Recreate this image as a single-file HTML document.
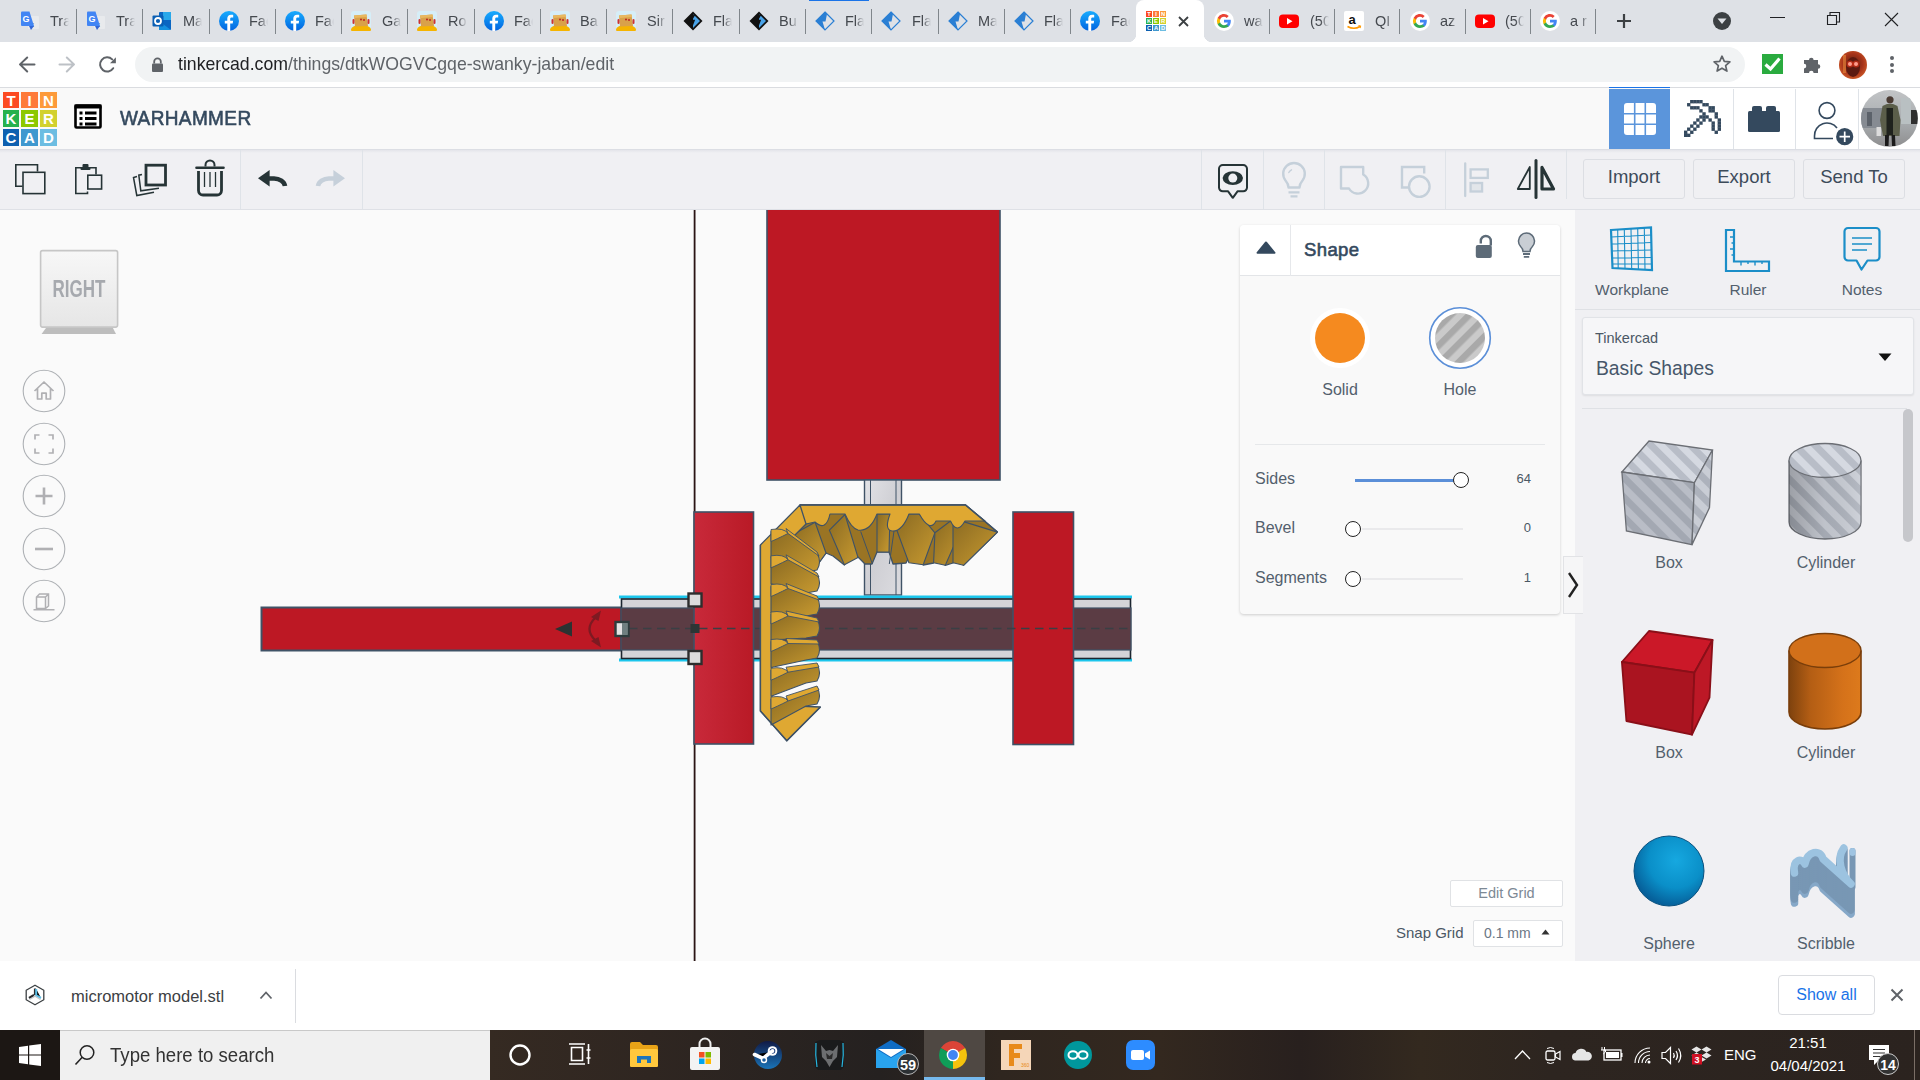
<!DOCTYPE html>
<html><head><meta charset="utf-8"><style>*{margin:0;padding:0;box-sizing:border-box}
html,body{width:1920px;height:1080px;overflow:hidden;background:#fafafa;font-family:"Liberation Sans",sans-serif}
.a{position:absolute}
svg{overflow:visible}

.tt{font-size:14.5px;line-height:18px;color:#45494f;width:19px;white-space:nowrap;overflow:hidden;-webkit-mask-image:linear-gradient(90deg,#000 55%,transparent 100%)}
.url{font-size:19px;line-height:22px;color:#5f6368;white-space:nowrap;transform-origin:0 0;transform:scaleX(.93)}

.logo{color:#fff;font-weight:bold;font-size:15px;line-height:17px;text-align:center}
.btn{width:102px;height:40px;border:1px solid #dcdee3;border-radius:3px;font-size:18.5px;line-height:34px;text-align:center;color:#3d4b5a;background:#f0f0f3}

.lbl{font-size:16px;line-height:20px;color:#53606d;text-align:center;white-space:nowrap}
.pn{font-size:16px;color:#53606d;white-space:nowrap}
.sx{transform-origin:0 0}
</style></head><body>
<svg width="0" height="0" style="position:absolute"><defs>
<symbol id="i-gt" viewBox="0 0 20 20"><rect x="8" y="5" width="11" height="13" rx="1" fill="#e8eaed"/><text x="10" y="16" font-size="8" fill="#5f6368" font-family="Liberation Sans">x</text><path d="M1 1.5Q1 0.5 2 0.5H9.5L14 15H2Q1 15 1 14Z" fill="#4285f4"/><path d="M9 15L11 19L14 15Z" fill="#3367d6"/><text x="2.5" y="11" font-size="9" font-weight="bold" fill="#fff" font-family="Liberation Sans">G</text></symbol>
<symbol id="i-ol" viewBox="0 0 20 20"><rect x="7" y="1" width="12" height="18" rx="1" fill="#0a66c2"/><rect x="11" y="1" width="8" height="8" fill="#28a8ea"/><path d="M7 10L19 19H7Z" fill="#1490df"/><rect x="0.5" y="4.5" width="11" height="11" rx="1" fill="#0a5fb4"/><circle cx="6" cy="10" r="3" fill="none" stroke="#fff" stroke-width="1.8"/></symbol>
<symbol id="i-fb" viewBox="0 0 20 20"><defs><linearGradient id="fbg" x1="0" y1="0" x2="0" y2="1"><stop offset="0" stop-color="#18acfe"/><stop offset="1" stop-color="#0163e0"/></linearGradient></defs><circle cx="10" cy="10" r="10" fill="url(#fbg)"/><path d="M11.2 20V12.6H13.7L14.1 9.7H11.2V7.9C11.2 7.1 11.5 6.5 12.6 6.5H14.2V3.9C13.9 3.9 13 3.8 12 3.8C9.8 3.8 8.3 5.1 8.3 7.6V9.7H5.8V12.6H8.3V20Z" fill="#fff"/></symbol>
<symbol id="i-rb" viewBox="0 0 20 20"><rect x="0" y="0" width="20" height="20" rx="3" fill="#d6eef8"/><ellipse cx="10" cy="18.5" rx="10" ry="4.5" fill="#f5b400"/><path d="M3 4.5L15.5 3.5L17 15L4 15.5Z" fill="#d9a14a"/><path d="M3 4.5L15.5 3.5L16 6L3.5 7Z" fill="#e8b860"/><circle cx="10" cy="8.5" r="1" fill="#b22"/><circle cx="13" cy="9" r="1" fill="#b22"/><rect x="1.5" y="8" width="2" height="5" rx="1" fill="#c33"/><rect x="16.5" y="8" width="2" height="5" rx="1" fill="#c33"/></symbol>
<symbol id="i-fd" viewBox="0 0 20 20"><path d="M10 0.5L19.5 10L10 19.5L0.5 10Z" fill="#111"/><path d="M10 3L17 10L10 17Z" fill="#4aa3e8"/><path d="M11.5 3.5L8 9.5H11L8.5 16" fill="none" stroke="#111" stroke-width="1.6"/></symbol>
<symbol id="i-fl" viewBox="0 0 20 20"><path d="M10 1L19 10L10 19L1 10Z" fill="none" stroke="#2a7fd4" stroke-width="1.2"/><path d="M10 1L1 10L10 19L7.5 10.5H10.5L12 3Z" fill="#2a7fd4"/></symbol>
<symbol id="i-tc" viewBox="0 0 20 20"><rect x="0" y="0" width="6" height="6" fill="#fc4a22"/><text x="3.0" y="5.1" font-size="5.8" font-weight="bold" fill="#fff" text-anchor="middle" font-family="Liberation Sans">T</text><rect x="7" y="0" width="6" height="6" fill="#fe7a3a"/><text x="10.0" y="5.1" font-size="5.8" font-weight="bold" fill="#fff" text-anchor="middle" font-family="Liberation Sans">I</text><rect x="14" y="0" width="6" height="6" fill="#fd9a3a"/><text x="17.0" y="5.1" font-size="5.8" font-weight="bold" fill="#fff" text-anchor="middle" font-family="Liberation Sans">N</text><rect x="0" y="7" width="6" height="6" fill="#26b14e"/><text x="3.0" y="12.1" font-size="5.8" font-weight="bold" fill="#fff" text-anchor="middle" font-family="Liberation Sans">K</text><rect x="7" y="7" width="6" height="6" fill="#8cc800"/><text x="10.0" y="12.1" font-size="5.8" font-weight="bold" fill="#fff" text-anchor="middle" font-family="Liberation Sans">E</text><rect x="14" y="7" width="6" height="6" fill="#d2d12e"/><text x="17.0" y="12.1" font-size="5.8" font-weight="bold" fill="#fff" text-anchor="middle" font-family="Liberation Sans">R</text><rect x="0" y="14" width="6" height="6" fill="#0d60b0"/><text x="3.0" y="19.1" font-size="5.8" font-weight="bold" fill="#fff" text-anchor="middle" font-family="Liberation Sans">C</text><rect x="7" y="14" width="6" height="6" fill="#3f98cf"/><text x="10.0" y="19.1" font-size="5.8" font-weight="bold" fill="#fff" text-anchor="middle" font-family="Liberation Sans">A</text><rect x="14" y="14" width="6" height="6" fill="#6cbde2"/><text x="17.0" y="19.1" font-size="5.8" font-weight="bold" fill="#fff" text-anchor="middle" font-family="Liberation Sans">D</text></symbol>
<symbol id="i-gg" viewBox="0 0 20 20"><circle cx="10" cy="10" r="10" fill="#fff"/><path d="M16.8 10.2c0-.5 0-1-.1-1.5H10v2.8h3.8a3.3 3.3 0 0 1-1.4 2.1v1.8h2.3c1.3-1.2 2.1-3 2.1-5.2z" fill="#4285f4"/><path d="M10 17c1.9 0 3.5-.6 4.7-1.7l-2.3-1.8c-.6.4-1.4.7-2.4.7-1.8 0-3.4-1.2-3.9-2.9H3.7v1.9A7 7 0 0 0 10 17z" fill="#34a853"/><path d="M6.1 11.3a4.2 4.2 0 0 1 0-2.6V6.8H3.7a7 7 0 0 0 0 6.4z" fill="#fbbc05"/><path d="M10 5.8c1 0 1.9.4 2.7 1.1l2-2A7 7 0 0 0 3.7 6.8l2.4 1.9C6.6 7 8.2 5.8 10 5.8z" fill="#ea4335"/></symbol>
<symbol id="i-yt" viewBox="0 0 20 20"><rect x="0" y="3.5" width="20" height="13.5" rx="4" fill="#ff0000"/><path d="M8 7V13.5L13.5 10.2Z" fill="#fff"/></symbol>
<symbol id="i-am" viewBox="0 0 20 20"><rect width="20" height="20" rx="2" fill="#fff"/><text x="4.5" y="13" font-size="13" font-weight="bold" fill="#111" font-family="Liberation Sans">a</text><path d="M3.5 15.5Q10 19 16 15.5" fill="none" stroke="#f90" stroke-width="1.5"/><path d="M14.5 14.5L16.5 15.2L16 17" fill="none" stroke="#f90" stroke-width="1.2"/></symbol>
</defs></svg>
<div class="a" style="left:0;top:0;width:1920px;height:42px;background:#dee1e6"></div>
<div class="a" style="left:809px;top:0;width:60px;height:1px;background:#1a73e8"></div>
<svg class="a" style="left:20px;top:11px" width="20" height="20"><use href="#i-gt"/></svg>
<div class="a tt" style="left:50px;top:12px">Tra</div>
<div class="a" style="left:76px;top:9px;width:1px;height:25px;background:#80868b"></div>
<svg class="a" style="left:86px;top:11px" width="20" height="20"><use href="#i-gt"/></svg>
<div class="a tt" style="left:116px;top:12px">Tra</div>
<div class="a" style="left:142px;top:9px;width:1px;height:25px;background:#80868b"></div>
<svg class="a" style="left:152px;top:11px" width="20" height="20"><use href="#i-ol"/></svg>
<div class="a tt" style="left:183px;top:12px">Ma</div>
<div class="a" style="left:209px;top:9px;width:1px;height:25px;background:#80868b"></div>
<svg class="a" style="left:219px;top:11px" width="20" height="20"><use href="#i-fb"/></svg>
<div class="a tt" style="left:249px;top:12px">Fac</div>
<div class="a" style="left:275px;top:9px;width:1px;height:25px;background:#80868b"></div>
<svg class="a" style="left:285px;top:11px" width="20" height="20"><use href="#i-fb"/></svg>
<div class="a tt" style="left:315px;top:12px">Fac</div>
<div class="a" style="left:341px;top:9px;width:1px;height:25px;background:#80868b"></div>
<svg class="a" style="left:351px;top:11px" width="20" height="20"><use href="#i-rb"/></svg>
<div class="a tt" style="left:382px;top:12px">Ga</div>
<div class="a" style="left:407px;top:9px;width:1px;height:25px;background:#80868b"></div>
<svg class="a" style="left:417px;top:11px" width="20" height="20"><use href="#i-rb"/></svg>
<div class="a tt" style="left:448px;top:12px">Ro</div>
<div class="a" style="left:474px;top:9px;width:1px;height:25px;background:#80868b"></div>
<svg class="a" style="left:484px;top:11px" width="20" height="20"><use href="#i-fb"/></svg>
<div class="a tt" style="left:514px;top:12px">Fac</div>
<div class="a" style="left:540px;top:9px;width:1px;height:25px;background:#80868b"></div>
<svg class="a" style="left:550px;top:11px" width="20" height="20"><use href="#i-rb"/></svg>
<div class="a tt" style="left:580px;top:12px">Ba</div>
<div class="a" style="left:606px;top:9px;width:1px;height:25px;background:#80868b"></div>
<svg class="a" style="left:616px;top:11px" width="20" height="20"><use href="#i-rb"/></svg>
<div class="a tt" style="left:647px;top:12px">Sir</div>
<div class="a" style="left:672px;top:9px;width:1px;height:25px;background:#80868b"></div>
<svg class="a" style="left:683px;top:11px" width="20" height="20"><use href="#i-fd"/></svg>
<div class="a tt" style="left:713px;top:12px">Fla</div>
<div class="a" style="left:739px;top:9px;width:1px;height:25px;background:#80868b"></div>
<svg class="a" style="left:749px;top:11px" width="20" height="20"><use href="#i-fd"/></svg>
<div class="a tt" style="left:779px;top:12px">Bu</div>
<div class="a" style="left:805px;top:9px;width:1px;height:25px;background:#80868b"></div>
<svg class="a" style="left:815px;top:11px" width="20" height="20"><use href="#i-fl"/></svg>
<div class="a tt" style="left:845px;top:12px">Fla</div>
<div class="a" style="left:871px;top:9px;width:1px;height:25px;background:#80868b"></div>
<svg class="a" style="left:881px;top:11px" width="20" height="20"><use href="#i-fl"/></svg>
<div class="a tt" style="left:912px;top:12px">Fla</div>
<div class="a" style="left:938px;top:9px;width:1px;height:25px;background:#80868b"></div>
<svg class="a" style="left:948px;top:11px" width="20" height="20"><use href="#i-fl"/></svg>
<div class="a tt" style="left:978px;top:12px">Ma</div>
<div class="a" style="left:1004px;top:9px;width:1px;height:25px;background:#80868b"></div>
<svg class="a" style="left:1014px;top:11px" width="20" height="20"><use href="#i-fl"/></svg>
<div class="a tt" style="left:1044px;top:12px">Fla</div>
<div class="a" style="left:1070px;top:9px;width:1px;height:25px;background:#80868b"></div>
<svg class="a" style="left:1080px;top:11px" width="20" height="20"><use href="#i-fb"/></svg>
<div class="a tt" style="left:1111px;top:12px">Fac</div>
<div class="a" style="left:1136px;top:0;width:68px;height:42px;background:#fff;border-radius:8px 8px 0 0"></div>
<div class="a" style="left:1128px;top:34px;width:8px;height:8px;background:radial-gradient(circle at 0 0,#dee1e6 8px,#fff 8.5px)"></div>
<div class="a" style="left:1204px;top:34px;width:8px;height:8px;background:radial-gradient(circle at 100% 0,#dee1e6 8px,#fff 8.5px)"></div>
<svg class="a" style="left:1146px;top:11px" width="20" height="20"><use href="#i-tc"/></svg>
<svg class="a" style="left:1178px;top:16px" width="11" height="11" viewBox="0 0 11 11"><path d="M1 1L10 10M10 1L1 10" stroke="#3c4043" stroke-width="1.8"/></svg>
<svg class="a" style="left:1214px;top:11px" width="20" height="20"><use href="#i-gg"/></svg>
<div class="a tt" style="left:1244px;top:12px">wa</div>
<div class="a" style="left:1269px;top:9px;width:1px;height:25px;background:#80868b"></div>
<svg class="a" style="left:1279px;top:11px" width="20" height="20"><use href="#i-yt"/></svg>
<div class="a tt" style="left:1310px;top:12px">(50</div>
<div class="a" style="left:1334px;top:9px;width:1px;height:25px;background:#80868b"></div>
<svg class="a" style="left:1344px;top:11px" width="20" height="20"><use href="#i-am"/></svg>
<div class="a tt" style="left:1375px;top:12px">QI</div>
<div class="a" style="left:1399px;top:9px;width:1px;height:25px;background:#80868b"></div>
<svg class="a" style="left:1410px;top:11px" width="20" height="20"><use href="#i-gg"/></svg>
<div class="a tt" style="left:1440px;top:12px">az</div>
<div class="a" style="left:1465px;top:9px;width:1px;height:25px;background:#80868b"></div>
<svg class="a" style="left:1475px;top:11px" width="20" height="20"><use href="#i-yt"/></svg>
<div class="a tt" style="left:1505px;top:12px">(50</div>
<div class="a" style="left:1530px;top:9px;width:1px;height:25px;background:#80868b"></div>
<svg class="a" style="left:1540px;top:11px" width="20" height="20"><use href="#i-gg"/></svg>
<div class="a tt" style="left:1570px;top:12px">a r</div>
<div class="a" style="left:1595px;top:9px;width:1px;height:25px;background:#80868b"></div>
<svg class="a" style="left:1616px;top:13px" width="16" height="16" viewBox="0 0 16 16"><path d="M8 1V15M1 8H15" stroke="#3c4043" stroke-width="2.2"/></svg>
<svg class="a" style="left:1712px;top:11px" width="20" height="20" viewBox="0 0 20 20"><circle cx="10" cy="10" r="9" fill="#3c4043"/><path d="M5.5 7.5H14.5L10 13Z" fill="#dee1e6"/></svg>
<div class="a" style="left:1770px;top:17px;width:15px;height:1px;background:#202124"></div>
<svg class="a" style="left:1826px;top:11px" width="15" height="15" viewBox="0 0 15 15"><path d="M1.5 4.5h9v9h-9z" fill="none" stroke="#202124" stroke-width="1.1"/><path d="M4 4.5V1.5h9.5v9.5H10.5" fill="none" stroke="#202124" stroke-width="1.1"/></svg>
<svg class="a" style="left:1884px;top:12px" width="15" height="15" viewBox="0 0 15 15"><path d="M1 1L14 14M14 1L1 14" stroke="#202124" stroke-width="1.1"/></svg>
<div class="a" style="left:0;top:42px;width:1920px;height:45px;background:#fff"></div>
<div class="a" style="left:0;top:87px;width:1920px;height:1px;background:#dadce0"></div>
<div class="a" style="left:135px;top:47px;width:1610px;height:35px;border-radius:18px;background:#f1f3f4"></div>
<svg class="a" style="left:18px;top:56px" width="18" height="18" viewBox="0 0 18 18"><path d="M16.5 8.4H2M9.2 1.5L2 8.4L9.2 15.5" fill="none" stroke="#5f6368" stroke-width="2" stroke-linecap="round" stroke-linejoin="round"/></svg>
<svg class="a" style="left:58px;top:56px" width="18" height="18" viewBox="0 0 18 18"><path d="M1.5 8.4H16M8.8 1.5L16 8.4L8.8 15.5" fill="none" stroke="#bdc1c6" stroke-width="2" stroke-linecap="round" stroke-linejoin="round"/></svg>
<svg class="a" style="left:98px;top:56px" width="19" height="18" viewBox="0 0 19 18"><path d="M15.2 12.2A7.1 7.1 0 1 1 14.2 3.4" fill="none" stroke="#5f6368" stroke-width="2" stroke-linecap="round"/><path d="M12 7.3H17.9V1.2Z" fill="#5f6368"/></svg>
<svg class="a" style="left:151px;top:57px" width="13" height="15" viewBox="0 0 13 15"><path d="M3.2 6.5V4.6a3.3 3.3 0 0 1 6.6 0V6.5" fill="none" stroke="#5f6368" stroke-width="1.8"/><rect x="1" y="6.5" width="11" height="8.5" rx="1" fill="#5f6368"/></svg>
<div class="a url" style="left:178px;top:53px"><span style="color:#202124">tinkercad.com</span>/things/dtkWOGVCgqe-swanky-jaban/edit</div>
<svg class="a" style="left:1712px;top:54px" width="20" height="20" viewBox="0 0 20 20"><path d="M10 2.2L12.3 7.4L17.9 7.9L13.6 11.6L14.9 17.1L10 14.2L5.1 17.1L6.4 11.6L2.1 7.9L7.7 7.4Z" fill="none" stroke="#5f6368" stroke-width="1.7" stroke-linejoin="round"/></svg>
<svg class="a" style="left:1762px;top:54px" width="21" height="20" viewBox="0 0 21 20"><rect width="21" height="20" fill="#2aab3f"/><path d="M3.5 10.5L8.5 15L17.5 4.5" fill="none" stroke="#fff" stroke-width="3.2"/></svg>
<svg class="a" style="left:1803px;top:55px" width="20" height="19" viewBox="0 0 20 19"><path d="M1 5H6A2.3 2.3 0 1 1 10.6 5H15V9.2A2.3 2.3 0 1 1 15 13.8V18H10.6A2.3 2.3 0 1 0 6 18H1V13.4A2.3 2.3 0 1 0 1 8.8Z" fill="#5f6368"/></svg>
<svg class="a" style="left:1839px;top:51px" width="28" height="28" viewBox="0 0 28 28"><defs><radialGradient id="av1" cx="50%" cy="45%" r="60%"><stop offset="0" stop-color="#5a2012"/><stop offset=".6" stop-color="#a8341a"/><stop offset="1" stop-color="#d3602a"/></radialGradient></defs><circle cx="14" cy="14" r="14" fill="url(#av1)"/><rect x="4" y="4" width="3" height="18" fill="#e88b3a" opacity=".6"/><ellipse cx="14" cy="16" rx="7" ry="10" fill="#5c1a10"/><circle cx="11" cy="13" r="2" fill="#fff"/><circle cx="17" cy="13" r="2" fill="#fff"/><circle cx="11" cy="13" r="3.5" fill="#ff3a1a" opacity=".5"/><circle cx="17" cy="13" r="3.5" fill="#ff3a1a" opacity=".5"/></svg>
<div class="a" style="left:1890px;top:56.0px;width:4px;height:4px;border-radius:2px;background:#5f6368"></div>
<div class="a" style="left:1890px;top:62.5px;width:4px;height:4px;border-radius:2px;background:#5f6368"></div>
<div class="a" style="left:1890px;top:69.0px;width:4px;height:4px;border-radius:2px;background:#5f6368"></div>
<div class="a" style="left:0;top:88px;width:1920px;height:61px;background:#f9f9f9"></div>
<div class="a" style="left:1670px;top:88px;width:250px;height:61px;background:#fff"></div>
<div class="a" style="left:0;top:149px;width:1920px;height:1px;background:#dcdee4"></div>
<div class="a logo" style="left:3px;top:92px;width:16px;height:16px;background:#fc4a22">T</div>
<div class="a logo" style="left:21px;top:92px;width:17px;height:16px;background:#fe7a3a">I</div>
<div class="a logo" style="left:40px;top:92px;width:17px;height:16px;background:#fd9a3a">N</div>
<div class="a logo" style="left:3px;top:110px;width:16px;height:17px;background:#26b14e">K</div>
<div class="a logo" style="left:21px;top:110px;width:17px;height:17px;background:#8cc800">E</div>
<div class="a logo" style="left:40px;top:110px;width:17px;height:17px;background:#d2d12e">R</div>
<div class="a logo" style="left:3px;top:129px;width:16px;height:17px;background:#0d60b0">C</div>
<div class="a logo" style="left:21px;top:129px;width:17px;height:17px;background:#3f98cf">A</div>
<div class="a logo" style="left:40px;top:129px;width:17px;height:17px;background:#6cbde2">D</div>
<svg class="a" style="left:73px;top:103px" width="30" height="27" viewBox="0 0 30 27"><rect x="2.5" y="2.5" width="25" height="22" rx="1" fill="#fff" stroke="#000" stroke-width="2.6"/><rect x="1.5" y="1.5" width="27" height="4" fill="#000"/><rect x="6.5" y="8.5" width="3" height="3" fill="#000"/><rect x="12" y="8.5" width="11.5" height="3" fill="#000"/><rect x="6.5" y="14" width="3" height="3" fill="#000"/><rect x="12" y="14" width="11.5" height="3" fill="#000"/><rect x="6.5" y="19.5" width="3" height="3" fill="#000"/><rect x="12" y="19.5" width="11.5" height="3" fill="#000"/></svg>
<div class="a" style="left:120px;top:106px;font-size:20px;line-height:24px;color:#34495e;letter-spacing:0.4px;-webkit-text-stroke:0.6px #34495e;transform-origin:0 0;transform:scaleX(.95)">WARHAMMER</div>
<div class="a" style="left:1609px;top:87px;width:61px;height:1px;background:#1a73e8"></div>
<div class="a" style="left:1609px;top:89px;width:61px;height:60px;background:#5b95db"></div>
<svg class="a" style="left:1624px;top:103px" width="32" height="32" viewBox="0 0 32 32"><rect x="0" y="0" width="32" height="32" rx="3" fill="#fff"/><path d="M10.7 0V32M21.3 0V32M0 10.7H32M0 21.3H32" stroke="#5b95db" stroke-width="1.6"/></svg>
<div class="a" style="left:1733px;top:89px;width:1px;height:60px;background:#dfe3e8"></div>
<div class="a" style="left:1795px;top:89px;width:1px;height:60px;background:#dfe3e8"></div>
<div class="a" style="left:1858px;top:89px;width:1px;height:60px;background:#dfe3e8"></div>
<svg class="a" style="left:1683.7px;top:100.3px" width="36.7" height="36.7" viewBox="0 0 12 12"><g fill="#34495e"><rect x="2" y="0" width="1.1" height="1.1"/><rect x="3" y="0" width="1.1" height="1.1"/><rect x="4" y="0" width="1.1" height="1.1"/><rect x="5" y="0" width="1.1" height="1.1"/><rect x="1" y="1" width="1.1" height="1.1"/><rect x="6" y="1" width="1.1" height="1.1"/><rect x="7" y="1" width="1.1" height="1.1"/><rect x="2" y="2" width="1.1" height="1.1"/><rect x="3" y="2" width="1.1" height="1.1"/><rect x="4" y="2" width="1.1" height="1.1"/><rect x="8" y="2" width="1.1" height="1.1"/><rect x="9" y="2" width="1.1" height="1.1"/><rect x="5" y="3" width="1.1" height="1.1"/><rect x="8" y="3" width="1.1" height="1.1"/><rect x="9" y="3" width="1.1" height="1.1"/><rect x="6" y="4" width="1.1" height="1.1"/><rect x="10" y="4" width="1.1" height="1.1"/><rect x="5" y="5" width="1.1" height="1.1"/><rect x="6" y="5" width="1.1" height="1.1"/><rect x="7" y="5" width="1.1" height="1.1"/><rect x="10" y="5" width="1.1" height="1.1"/><rect x="4" y="6" width="1.1" height="1.1"/><rect x="6" y="6" width="1.1" height="1.1"/><rect x="8" y="6" width="1.1" height="1.1"/><rect x="11" y="6" width="1.1" height="1.1"/><rect x="3" y="7" width="1.1" height="1.1"/><rect x="5" y="7" width="1.1" height="1.1"/><rect x="9" y="7" width="1.1" height="1.1"/><rect x="11" y="7" width="1.1" height="1.1"/><rect x="2" y="8" width="1.1" height="1.1"/><rect x="4" y="8" width="1.1" height="1.1"/><rect x="9" y="8" width="1.1" height="1.1"/><rect x="11" y="8" width="1.1" height="1.1"/><rect x="1" y="9" width="1.1" height="1.1"/><rect x="3" y="9" width="1.1" height="1.1"/><rect x="9" y="9" width="1.1" height="1.1"/><rect x="11" y="9" width="1.1" height="1.1"/><rect x="0" y="10" width="1.1" height="1.1"/><rect x="2" y="10" width="1.1" height="1.1"/><rect x="10" y="10" width="1.1" height="1.1"/><rect x="0" y="11" width="1.1" height="1.1"/><rect x="1" y="11" width="1.1" height="1.1"/></g></svg>
<svg class="a" style="left:1747px;top:105px" width="34" height="28" viewBox="0 0 34 28"><rect x="5" y="1" width="10" height="8" rx="2" fill="#34495e"/><rect x="19" y="1" width="10" height="8" rx="2" fill="#34495e"/><rect x="1" y="6" width="32" height="21" rx="1.5" fill="#34495e"/></svg>
<svg class="a" style="left:1812px;top:100px" width="44" height="46" viewBox="0 0 44 46"><circle cx="15" cy="10.5" r="7.9" fill="none" stroke="#34495e" stroke-width="1.6"/><path d="M25 28A12.5 12.5 0 0 0 2.5 36V38.5H21" fill="none" stroke="#34495e" stroke-width="1.6"/><circle cx="32.7" cy="36.7" r="8.6" fill="#34495e"/><path d="M32.7 31.5V42M27.5 36.7H38" stroke="#fff" stroke-width="1.7"/></svg>
<svg class="a" style="left:1861px;top:90px" width="57" height="57" viewBox="0 0 57 57"><defs><clipPath id="avc"><circle cx="28.4" cy="28.4" r="28.4"/></clipPath><linearGradient id="avg" x1="0" y1="0" x2="0" y2="1"><stop offset="0" stop-color="#c2c4c6"/><stop offset=".55" stop-color="#a9adb0"/><stop offset="1" stop-color="#8e8e8f"/></linearGradient></defs><g clip-path="url(#avc)"><rect width="57" height="57" fill="url(#avg)"/><rect x="0" y="18" width="22" height="20" fill="#868b92"/><rect x="6" y="22" width="5" height="14" fill="#5c626a"/><rect x="50" y="20" width="7" height="14" fill="#2e2e2e"/><rect x="40" y="8" width="10" height="26" fill="#b9c0c2"/><path d="M21.5 16L26 14H32L36.5 16L39.5 30L38.5 46H22L19 30Z" fill="#5b5e4a"/><rect x="25.5" y="18" width="6.5" height="27" fill="#1f221d"/><path d="M24 45H28L27.5 56H24ZM30.5 45H34L34.5 56H31Z" fill="#1b1b1b"/><circle cx="29" cy="9.8" r="3.6" fill="#4a3b33"/><rect x="15.5" y="37" width="4.5" height="9" fill="#dcdcdc"/></g></svg>
<div class="a" style="left:0;top:150px;width:1920px;height:59px;background:#f0f0f3"></div>
<div class="a" style="left:0;top:150px;width:1920px;height:3px;background:linear-gradient(#e4e5ea,#f0f0f3)"></div>
<div class="a" style="left:0;top:209px;width:1920px;height:1px;background:#dfe1e6"></div>
<div class="a" style="left:240px;top:150px;width:1px;height:59px;background:#dfe3e8"></div>
<div class="a" style="left:362px;top:150px;width:1px;height:59px;background:#dfe3e8"></div>
<div class="a" style="left:1201px;top:150px;width:1px;height:59px;background:#dfe3e8"></div>
<div class="a" style="left:1263px;top:150px;width:1px;height:59px;background:#dfe3e8"></div>
<div class="a" style="left:1324px;top:150px;width:1px;height:59px;background:#dfe3e8"></div>
<div class="a" style="left:1445px;top:150px;width:1px;height:59px;background:#dfe3e8"></div>
<div class="a" style="left:1566px;top:150px;width:1px;height:49px;background:#dfe3e8"></div>
<svg class="a" style="left:14px;top:163px" width="32" height="32" viewBox="0 0 32 32"><path d="M8.5 23.2H1.8V1.8H23.5V8.5" fill="none" stroke="#263436" stroke-width="1.6"/><rect x="9" y="9.3" width="21.8" height="21.3" fill="none" stroke="#263436" stroke-width="1.6"/></svg>
<svg class="a" style="left:74px;top:163px" width="30" height="32" viewBox="0 0 30 32"><path d="M13.5 28.5V30.5H1.8V4.8H7.5M16 4.8H22V11.5" fill="none" stroke="#263436" stroke-width="1.6"/><rect x="8.5" y="1" width="6" height="4.5" rx="1" fill="#263436"/><rect x="6.5" y="4" width="10" height="3" rx="1" fill="#263436"/><rect x="13.8" y="12.2" width="13.8" height="13.8" fill="none" stroke="#263436" stroke-width="1.6"/></svg>
<svg class="a" style="left:132px;top:163px" width="36" height="34" viewBox="0 0 36 34"><path d="M5 13.5L1.5 14.5L4.8 32.5L22 29.2" fill="none" stroke="#263436" stroke-width="1.5"/><path d="M10 11.5L6.8 12.2L8.8 27.8L27 25.2" fill="none" stroke="#263436" stroke-width="1.5"/><rect x="14" y="2.2" width="19.5" height="19.8" fill="#f0f0f3" stroke="#263436" stroke-width="2.8"/></svg>
<svg class="a" style="left:195px;top:160px" width="30" height="37" viewBox="0 0 30 37"><path d="M10.5 6.5V5A3.5 3.5 0 0 1 19.5 5V6.5" fill="none" stroke="#263436" stroke-width="2"/><path d="M1.5 7.8H28.5" stroke="#263436" stroke-width="2.6" stroke-linecap="round"/><path d="M3.5 11V30.5A4.5 4.5 0 0 0 8 35H22A4.5 4.5 0 0 0 26.5 30.5V11" fill="none" stroke="#263436" stroke-width="2.8"/><path d="M9.5 12V27M15 12V27M20.5 12V27" stroke="#263436" stroke-width="1.3"/></svg>
<svg class="a" style="left:257px;top:169px" width="30" height="19" viewBox="0 0 30 19"><path d="M1 9.3L12.6 1V17.5Z" fill="#263436"/><path d="M12 9.5H17A11 8.5 0 0 1 28 17" fill="none" stroke="#263436" stroke-width="4.6"/></svg>
<svg class="a" style="left:316px;top:169px" width="30" height="19" viewBox="0 0 30 19"><path d="M29 9.3L17.4 1V17.5Z" fill="#c6d0da"/><path d="M18 9.5H13A11 8.5 0 0 0 2 17" fill="none" stroke="#c6d0da" stroke-width="4.6"/></svg>
<svg class="a" style="left:1217px;top:163px" width="33" height="37" viewBox="0 0 33 37"><path d="M5.8 2H26.2A3.8 3.8 0 0 1 30 5.8V24.5A3.8 3.8 0 0 1 26.2 28.3H20.5L15.8 34.8L11.1 28.3H5.8A3.8 3.8 0 0 1 2 24.5V5.8A3.8 3.8 0 0 1 5.8 2Z" fill="none" stroke="#263436" stroke-width="2" stroke-linejoin="round"/><ellipse cx="15.8" cy="15.1" rx="10.2" ry="6.8" fill="#263436"/><circle cx="15.8" cy="15.1" r="4.5" fill="#f0f0f3"/></svg>
<svg class="a" style="left:1281px;top:164px" width="26" height="36" viewBox="0 0 26 36"><path d="M7.5 23.5Q7.5 20 4.5 16.5A10.8 10.8 0 1 1 21.5 16.5Q18.5 20 18.5 23.5Z" fill="none" stroke="#c5d0da" stroke-width="2.4" stroke-linejoin="round"/><path d="M7.5 28.3H18.5M9.5 32.3H16.5" stroke="#c5d0da" stroke-width="2.2"/><path d="M7.8 8.5A6 6 0 0 1 10.5 5.8" stroke="#c5d0da" stroke-width="1.4" fill="none" stroke-linecap="round"/></svg>
<svg class="a" style="left:1339px;top:165px" width="34" height="34" viewBox="0 0 34 34"><path d="M2 2H24.2V9.5A10.3 10.3 0 1 1 10 23.5H2Z" fill="none" stroke="#c5d0da" stroke-width="2.4" stroke-linejoin="round"/></svg>
<svg class="a" style="left:1400px;top:165px" width="34" height="34" viewBox="0 0 34 34"><path d="M8.5 22.5H2V2H24.2V8.5" fill="none" stroke="#c5d0da" stroke-width="2.4"/><circle cx="19.3" cy="21.6" r="10.3" fill="none" stroke="#c5d0da" stroke-width="2.4"/></svg>
<svg class="a" style="left:1463px;top:163px" width="27" height="34" viewBox="0 0 27 34"><path d="M2.2 0.5V33" stroke="#c5d0da" stroke-width="2.3" stroke-linecap="round"/><rect x="7.6" y="6.4" width="17.2" height="8.5" fill="none" stroke="#c5d0da" stroke-width="2.3"/><rect x="7.6" y="20" width="11.5" height="8.5" fill="#e2e6ea" stroke="#c5d0da" stroke-width="2.3"/></svg>
<svg class="a" style="left:1516px;top:159px" width="40" height="40" viewBox="0 0 40 40"><path d="M20 1.5V38.5" stroke="#263436" stroke-width="3" stroke-linecap="round"/><path d="M13.8 8V30H1.8Z" fill="none" stroke="#263436" stroke-width="1.8" stroke-linejoin="round"/><path d="M26 8.5V30H37.5Z" fill="none" stroke="#263436" stroke-width="3.2" stroke-linejoin="round"/></svg>
<div class="a btn" style="left:1583px;top:159px">Import</div>
<div class="a btn" style="left:1693px;top:159px">Export</div>
<div class="a btn" style="left:1803px;top:159px">Send To</div>
<div class="a" style="left:0;top:210px;width:1575px;height:751px;background:#fafafa"></div>
<svg class="a" style="left:38px;top:248px" width="82" height="88" viewBox="0 0 82 88"><defs><linearGradient id="vcg" x1="0" y1="0" x2="0" y2="1"><stop offset="0" stop-color="#f7f7f7"/><stop offset="1" stop-color="#e6e6e6"/></linearGradient></defs><path d="M8.7 79L3.6 86H78L74.4 79Z" fill="#bdbdbd"/><rect x="2.6" y="2.6" width="77" height="76.5" rx="2" fill="url(#vcg)" stroke="#c6c6c6" stroke-width="1.6"/></svg>
<div class="a" style="left:41px;top:277px;width:76px;text-align:center;font-size:23px;line-height:24px;font-weight:bold;color:#a6a9ae;transform:scaleX(.74)">RIGHT</div>
<svg class="a" style="left:22px;top:369.0px" width="44" height="44" viewBox="-22 -22 44 44"><circle r="20.8" fill="#fafafa" stroke="#aeb1b5" stroke-width="1.1"/><path d="M-9.5 0L0 -9L9.5 0M-6.5 -2.8V8H-2.2V2.2H2.2V8H6.5V-2.8" fill="none" stroke="#b0b0b3" stroke-width="1.7" stroke-linejoin="round"/></svg>
<svg class="a" style="left:22px;top:421.5px" width="44" height="44" viewBox="-22 -22 44 44"><circle r="20.8" fill="#fafafa" stroke="#aeb1b5" stroke-width="1.1"/><path d="M-9 -4.5V-9H-4.5M4.5 -9H9V-4.5M9 4.5V9H4.5M-4.5 9H-9V4.5" fill="none" stroke="#b0b0b3" stroke-width="1.7"/></svg>
<svg class="a" style="left:22px;top:474.0px" width="44" height="44" viewBox="-22 -22 44 44"><circle r="20.8" fill="#fafafa" stroke="#aeb1b5" stroke-width="1.1"/><path d="M-8.5 0H8.5M0 -8.5V8.5" stroke="#b0b0b3" stroke-width="2.6"/></svg>
<svg class="a" style="left:22px;top:526.5px" width="44" height="44" viewBox="-22 -22 44 44"><circle r="20.8" fill="#fafafa" stroke="#aeb1b5" stroke-width="1.1"/><path d="M-9 0H9" stroke="#b0b0b3" stroke-width="2.6"/></svg>
<svg class="a" style="left:22px;top:579.0px" width="44" height="44" viewBox="-22 -22 44 44"><circle r="20.8" fill="#fafafa" stroke="#aeb1b5" stroke-width="1.1"/><path d="M-10.5 8.8H10.5M-7.5 7.5V-4L-4.5 -7H4.5V5L1.5 7.5ZM-7.5 -4H1.5V7.5M1.5 -4L4.5 -7" fill="none" stroke="#b0b0b3" stroke-width="1.5"/></svg>
<svg class="a" style="left:0;top:210px;overflow:hidden" width="1575" height="751" viewBox="0 210 1575 751"><defs><linearGradient id="rg" x1="0" x2="1"><stop offset="0" stop-color="#c8293a"/><stop offset="1" stop-color="#b91a26"/></linearGradient><linearGradient id="shg" x1="0" y1="0" x2="1" y2="1"><stop offset="0" stop-color="#e2e2e6"/><stop offset=".5" stop-color="#cfcfd4"/><stop offset="1" stop-color="#dcdce0"/></linearGradient><linearGradient id="gd" x1="0" y1="0" x2="1" y2="1"><stop offset="0" stop-color="#8a6a22"/><stop offset="1" stop-color="#c89a30"/></linearGradient></defs><rect x="693.7" y="210" width="1.8" height="751" fill="#2a1414"/><rect x="767" y="200" width="233" height="280" fill="#bd1824" stroke="#3f5266" stroke-width="1.6"/><rect x="864.5" y="480" width="37" height="115" fill="url(#shg)" stroke="#3f5266" stroke-width="1.4"/><path d="M870.5 480V595M896 480V595" stroke="#3f5266" stroke-width="1"/><rect x="261.5" y="607.5" width="360" height="43" fill="#bd1824" stroke="#3f5266" stroke-width="2"/><rect x="619" y="595.5" width="513" height="3" fill="#1cc6ec"/><rect x="619" y="658.5" width="513" height="3" fill="#1cc6ec"/><rect x="621.5" y="599" width="509" height="59.5" fill="#d4d4d8" stroke="#1c2630" stroke-width="1.6"/><rect x="621" y="608" width="510" height="42" fill="#5b3c44" stroke="#3f5266" stroke-width="1.2"/><rect x="694" y="512" width="59.5" height="232" fill="url(#rg)" stroke="#3f5266" stroke-width="1.6"/><rect x="1013" y="512" width="60.5" height="232.5" fill="#bd1824" stroke="#3f5266" stroke-width="1.6"/><path d="M629 628.5H1131" stroke="#3a3f44" stroke-width="1.4" stroke-dasharray="8.5 5.5"/><path d="M800 505H965.5L997.4 532L963.5 565.3L958 556L953 563L945.3 565.3L938 553L933.6 563L923.2 565L918 556L911 553L906 563L893 564L889 552H877L872 564L865 564L858 557L851 555L844.4 565L833 556L826 553L819 562.7L800 545L786 548L772 556Z" fill="#9a7424" stroke="#3f5266" stroke-width="1.3" stroke-linejoin="round"/><polygon points="792,535 815.1,522.3 826,553 819,562.7 800,545" fill="url(#gd)" stroke="#3f5266" stroke-width="1.1" stroke-linejoin="round"/><polygon points="829.4,530.2 845,514.5 858,557.5 844.4,564.7" fill="url(#gd)" stroke="#3f5266" stroke-width="1.1" stroke-linejoin="round"/><polygon points="877,513.9 890,513.9 889,552 877,552" fill="url(#gd)" stroke="#3f5266" stroke-width="1.1" stroke-linejoin="round"/><polygon points="897,530.8 908.9,513.9 919.3,513.9 934.9,532.8 923.2,564.7 908.9,562.7" fill="url(#gd)" stroke="#3f5266" stroke-width="1.1" stroke-linejoin="round"/><polygon points="934.9,532.8 950.5,521 964.8,521 945.3,565.3 933.6,562.7" fill="url(#gd)" stroke="#3f5266" stroke-width="1.1" stroke-linejoin="round"/><polygon points="953,518.4 997.4,532.1 963.5,565.3 953,562.7" fill="url(#gd)" stroke="#3f5266" stroke-width="1.1" stroke-linejoin="round"/><path d="M860.7 531.5L872.4 564M894 531L889.3 564" stroke="#3f5266" stroke-width="1" fill="none"/><path d="M800 505H965.5L985 521H965Q957 535 950.5 521H936Q930 533 919.3 514H909Q902 532 892 531Q884 530 890 514H877Q870 532 858 530Q851 528 845 514H830Q826 532 815 522L806 524L790 535L775 545Z" fill="#dfa832" stroke="#3f5266" stroke-width="1.1" stroke-linejoin="round"/><path d="M800 505H965.5L997.4 532" fill="none" stroke="#3f5266" stroke-width="1.5"/><path d="M760.4 545L800 505L806 524L790 540L772 556V705L820.4 707L786.8 740.8L760.4 711Z" fill="#dfa832" stroke="#3f5266" stroke-width="1.3" stroke-linejoin="round"/><path d="M771 531.5 L786 531.5 L817 553.0 Q822 562.0 817 570.0 L806 572.0 L771 557.5 Z" fill="url(#gd)" stroke="#3f5266" stroke-width="1.1" stroke-linejoin="round"/><path d="M786 528.5 L817 552.0 L819 556.0 L788 533.5 Z" fill="#dfa832" stroke="#3f5266" stroke-width="0.9"/><path d="M771 529.5 Q784 527.5 788 533.5 Q776 539.5 771 541.5 Z" fill="#dfa832" stroke="#3f5266" stroke-width="0.9"/><path d="M771 557.8 L786 557.8 L817 574.0 Q822 583.0 817 591.0 L806 593.0 L771 583.8 Z" fill="url(#gd)" stroke="#3f5266" stroke-width="1.1" stroke-linejoin="round"/><path d="M786 554.8 L817 573.0 L819 577.0 L788 559.8 Z" fill="#dfa832" stroke="#3f5266" stroke-width="0.9"/><path d="M771 555.8 Q784 553.8 788 559.8 Q776 565.8 771 567.8 Z" fill="#dfa832" stroke="#3f5266" stroke-width="0.9"/><path d="M771 586.5 L786 586.5 L817 597.0 Q822 606.0 817 614.0 L806 616.0 L771 612.5 Z" fill="url(#gd)" stroke="#3f5266" stroke-width="1.1" stroke-linejoin="round"/><path d="M786 583.5 L817 596.0 L819 600.0 L788 588.5 Z" fill="#dfa832" stroke="#3f5266" stroke-width="0.9"/><path d="M771 584.5 Q784 582.5 788 588.5 Q776 594.5 771 596.5 Z" fill="#dfa832" stroke="#3f5266" stroke-width="0.9"/><path d="M771 614.0 L786 614.0 L817 619.0 Q822 628.0 817 636.0 L806 638.0 L771 640.0 Z" fill="url(#gd)" stroke="#3f5266" stroke-width="1.1" stroke-linejoin="round"/><path d="M786 611.0 L817 618.0 L819 622.0 L788 616.0 Z" fill="#dfa832" stroke="#3f5266" stroke-width="0.9"/><path d="M771 612.0 Q784 610.0 788 616.0 Q776 622.0 771 624.0 Z" fill="#dfa832" stroke="#3f5266" stroke-width="0.9"/><path d="M771 641.5 L786 641.5 L817 641.0 Q822 650.0 817 658.0 L806 660.0 L771 667.5 Z" fill="url(#gd)" stroke="#3f5266" stroke-width="1.1" stroke-linejoin="round"/><path d="M786 638.5 L817 640.0 L819 644.0 L788 643.5 Z" fill="#dfa832" stroke="#3f5266" stroke-width="0.9"/><path d="M771 639.5 Q784 637.5 788 643.5 Q776 649.5 771 651.5 Z" fill="#dfa832" stroke="#3f5266" stroke-width="0.9"/><path d="M771 670.2 L786 670.2 L817 664.0 Q822 673.0 817 681.0 L806 683.0 L771 696.2 Z" fill="url(#gd)" stroke="#3f5266" stroke-width="1.1" stroke-linejoin="round"/><path d="M786 667.2 L817 663.0 L819 667.0 L788 672.2 Z" fill="#dfa832" stroke="#3f5266" stroke-width="0.9"/><path d="M771 668.2 Q784 666.2 788 672.2 Q776 678.2 771 680.2 Z" fill="#dfa832" stroke="#3f5266" stroke-width="0.9"/><path d="M771 699.0 L786 699.0 L817 687.0 Q822 696.0 817 704.0 L806 706.0 L771 725.0 Z" fill="url(#gd)" stroke="#3f5266" stroke-width="1.1" stroke-linejoin="round"/><path d="M786 696.0 L817 686.0 L819 690.0 L788 701.0 Z" fill="#dfa832" stroke="#3f5266" stroke-width="0.9"/><path d="M771 697.0 Q784 695.0 788 701.0 Q776 707.0 771 709.0 Z" fill="#dfa832" stroke="#3f5266" stroke-width="0.9"/><path d="M760.4 545V711L786.8 740.8L820.4 707" fill="none" stroke="#3f5266" stroke-width="1.4"/><rect x="688.5" y="593.5" width="13" height="13" fill="#dcdcdc" stroke="#2d2d2d" stroke-width="2.4"/><rect x="688.5" y="651" width="13" height="13" fill="#dcdcdc" stroke="#2d2d2d" stroke-width="2.4"/><rect x="615.5" y="622" width="13" height="14" fill="#e4e4e4" stroke="#2d3d3d" stroke-width="2.4"/><rect x="622" y="623" width="5.5" height="12" fill="#6f8080"/><rect x="690.5" y="624" width="9" height="9" fill="#2d3535"/><path d="M555 629L572 621.5V636.5Z" fill="#2c3232"/><path d="M595 618Q584 629 595 640" fill="none" stroke="#7d1a22" stroke-width="2.2"/><path d="M591 617L601 610.5L598.5 621Z" fill="#7d1a22"/><path d="M591 641L601 647.5L598.5 637Z" fill="#7d1a22"/></svg>
<div class="a" style="left:1575px;top:210px;width:345px;height:751px;background:#f0f0f3"></div>
<svg class="a" style="left:1609px;top:226px" width="45" height="46" viewBox="0 0 45 46"><path d="M2 4L42 1.5L43 44L3.5 42Z" fill="none" stroke="#1b8ec8" stroke-width="2.2"/><path d="M8.7 3.5L9.2 42.5M15.3 3.1L16 42.8M22 2.8L22.7 43.2M28.7 2.4L29.4 43.5M35.3 2L36 43.8M2.2 11L42.3 9M2.4 18L42.5 16.5M2.6 25L42.6 24M2.8 32L42.8 31.5M3 38L42.9 38" stroke="#1b8ec8" stroke-width="1.1"/></svg>
<svg class="a" style="left:1724px;top:228px" width="47" height="45" viewBox="0 0 47 45"><path d="M2 2H10V33.5H45V43H2Z" fill="none" stroke="#1b8ec8" stroke-width="2.2"/><path d="M10 9H6M10 15H7.5M10 21H6M10 27H7.5M17 33.5V37.5M24 33.5V36M31 33.5V37.5M38 33.5V36" stroke="#1b8ec8" stroke-width="1.4"/></svg>
<svg class="a" style="left:1843px;top:226px" width="38" height="47" viewBox="0 0 38 47"><path d="M5 2H33A3.5 3.5 0 0 1 36.5 5.5V31A3.5 3.5 0 0 1 33 34.5H24.5L18.5 43.5L13.5 34.5H5A3.5 3.5 0 0 1 1.5 31V5.5A3.5 3.5 0 0 1 5 2Z" fill="none" stroke="#1b8ec8" stroke-width="2.2" stroke-linejoin="round"/><path d="M9 12H29M9 18H29M9 24H24" stroke="#1b8ec8" stroke-width="1.6"/></svg>
<div class="a lbl" style="left:1572px;top:280px;width:120px;font-size:15.5px">Workplane</div>
<div class="a lbl" style="left:1688px;top:280px;width:120px;font-size:15.5px">Ruler</div>
<div class="a lbl" style="left:1802px;top:280px;width:120px;font-size:15.5px">Notes</div>
<div class="a" style="left:1575px;top:309px;width:345px;height:1px;background:#dfe1e5"></div>
<div class="a" style="left:1582px;top:317px;width:332px;height:78px;background:#f6f6f8;border:1px solid #e1e3e7;border-radius:3px;box-shadow:0 1px 2px rgba(0,0,0,.08)"></div>
<div class="a" style="left:1595px;top:329px;font-size:14.5px;line-height:18px;color:#4b5865">Tinkercad</div>
<div class="a" style="left:1596px;top:357.5px;font-size:19.3px;line-height:22px;color:#46566a">Basic Shapes</div>
<svg class="a" style="left:1878px;top:353px" width="14" height="9" viewBox="0 0 14 9"><path d="M0.5 0.5H13.5L7 8Z" fill="#111"/></svg>
<div class="a" style="left:1582px;top:408px;width:325px;height:1px;background:#dfe1e5"></div>
<div class="a" style="left:1903px;top:409px;width:10px;height:133px;border-radius:5px;background:#c6c7cb"></div>
<svg class="a" style="left:1618px;top:437px" width="100" height="112" viewBox="0 0 100 112"><defs><pattern id="stp" width="14" height="14" patternUnits="userSpaceOnUse" patternTransform="rotate(-45)"><rect width="14" height="14" fill="#b9bdc6"/><rect width="7" height="14" fill="#a3a8b2"/></pattern><pattern id="stp2" width="14" height="14" patternUnits="userSpaceOnUse" patternTransform="rotate(-45)"><rect width="14" height="14" fill="#d5d9e1"/><rect width="7" height="14" fill="#b8bdc7"/></pattern><pattern id="stp3" width="14" height="14" patternUnits="userSpaceOnUse" patternTransform="rotate(-45)"><rect width="14" height="14" fill="#c9cdd5"/><rect width="7" height="14" fill="#adb2bc"/></pattern></defs>
<path d="M3.9 35L31 4L94.5 13L76.4 45.7Z" fill="url(#stp2)" stroke="#6b6e74" stroke-width="1.3"/><path d="M3.9 35L76.4 45.7L74 107.6L8.4 94Z" fill="url(#stp)" stroke="#6b6e74" stroke-width="1.3"/><path d="M76.4 45.7L94.5 13L91.5 70.6L74 107.6Z" fill="url(#stp3)" stroke="#6b6e74" stroke-width="1.3"/></svg>
<svg class="a" style="left:1786px;top:441px" width="80" height="102" viewBox="0 0 80 102"><defs><linearGradient id="cysh" x1="0" x2="1"><stop offset="0" stop-color="#000" stop-opacity=".22"/><stop offset=".5" stop-color="#000" stop-opacity=".05"/><stop offset="1" stop-color="#fff" stop-opacity=".1"/></linearGradient></defs><path d="M3 19.5V81A36 17 0 0 0 75 81V19.5" fill="url(#stp3)" stroke="#6b6e74" stroke-width="1.3"/><path d="M3 19.5V81A36 17 0 0 0 75 81V19.5" fill="url(#cysh)"/><ellipse cx="39" cy="19.5" rx="36" ry="17" fill="url(#stp2)" stroke="#6b6e74" stroke-width="1.3"/></svg>
<div class="a lbl" style="left:1609px;top:553px;width:120px">Box</div>
<div class="a lbl" style="left:1766px;top:553px;width:120px">Cylinder</div>
<svg class="a" style="left:1618px;top:627px" width="100" height="112" viewBox="0 0 100 112"><path d="M3.9 35L31 4L94.5 13L76.4 45.7Z" fill="#cb1828" stroke="#8a0f18" stroke-width="1.8" stroke-linejoin="round"/><path d="M3.9 35L76.4 45.7L74 107.6L8.4 94Z" fill="#aa1420" stroke="#8a0f18" stroke-width="1.8" stroke-linejoin="round"/><path d="M76.4 45.7L94.5 13L91.5 70.6L74 107.6Z" fill="#bd1826" stroke="#8a0f18" stroke-width="1.8" stroke-linejoin="round"/></svg>
<svg class="a" style="left:1786px;top:631px" width="80" height="102" viewBox="0 0 80 102"><defs><linearGradient id="cyg" x1="0" x2="1"><stop offset="0" stop-color="#7e420e"/><stop offset=".3" stop-color="#b45e14"/><stop offset=".75" stop-color="#d5721a"/><stop offset="1" stop-color="#dd7a1c"/></linearGradient></defs><path d="M3 19.5V81A36 17 0 0 0 75 81V19.5" fill="url(#cyg)" stroke="#7a3e0a" stroke-width="1.6"/><ellipse cx="39" cy="19.5" rx="36" ry="17" fill="#d2701a" stroke="#7a3e0a" stroke-width="1.4"/></svg>
<div class="a lbl" style="left:1609px;top:743px;width:120px">Box</div>
<div class="a lbl" style="left:1766px;top:743px;width:120px">Cylinder</div>
<svg class="a" style="left:1632px;top:834px" width="74" height="74" viewBox="0 0 74 74"><defs><radialGradient id="spg" cx="60%" cy="35%" r="65%"><stop offset="0" stop-color="#16a8e0"/><stop offset=".6" stop-color="#0a8fc8"/><stop offset="1" stop-color="#06609a"/></radialGradient></defs><circle cx="37" cy="37" r="35" fill="url(#spg)" stroke="#08507e" stroke-width="1"/></svg>
<svg class="a" style="left:1788px;top:843px" width="72" height="80" viewBox="0 0 72 80"><path d="M64.5 8V44" stroke="#7897b4" stroke-width="6" stroke-linecap="round"/><path d="M64.5 8V10" stroke="#9fc4e2" stroke-width="6" stroke-linecap="round"/><g><path d="M6.5 30C3.9 15.9 14.3 14.6 16.9 21.1C19.4 8.1 32.4 5.5 35 15.9L63 41C53.2 31.5 48 15.9 55.8 5" transform="translate(0 30)" fill="none" stroke="#86a8c8" stroke-width="7.5" stroke-linecap="round" stroke-linejoin="round"/><path d="M6.5 30C3.9 15.9 14.3 14.6 16.9 21.1C19.4 8.1 32.4 5.5 35 15.9L63 41C53.2 31.5 48 15.9 55.8 5" transform="translate(0 28)" fill="none" stroke="#86a8c8" stroke-width="7.5" stroke-linecap="round" stroke-linejoin="round"/><path d="M6.5 30C3.9 15.9 14.3 14.6 16.9 21.1C19.4 8.1 32.4 5.5 35 15.9L63 41C53.2 31.5 48 15.9 55.8 5" transform="translate(0 26)" fill="none" stroke="#7897b4" stroke-width="7.5" stroke-linecap="round" stroke-linejoin="round"/><path d="M6.5 30C3.9 15.9 14.3 14.6 16.9 21.1C19.4 8.1 32.4 5.5 35 15.9L63 41C53.2 31.5 48 15.9 55.8 5" transform="translate(0 24)" fill="none" stroke="#7897b4" stroke-width="7.5" stroke-linecap="round" stroke-linejoin="round"/><path d="M6.5 30C3.9 15.9 14.3 14.6 16.9 21.1C19.4 8.1 32.4 5.5 35 15.9L63 41C53.2 31.5 48 15.9 55.8 5" transform="translate(0 22)" fill="none" stroke="#7897b4" stroke-width="7.5" stroke-linecap="round" stroke-linejoin="round"/><path d="M6.5 30C3.9 15.9 14.3 14.6 16.9 21.1C19.4 8.1 32.4 5.5 35 15.9L63 41C53.2 31.5 48 15.9 55.8 5" transform="translate(0 20)" fill="none" stroke="#7897b4" stroke-width="7.5" stroke-linecap="round" stroke-linejoin="round"/><path d="M6.5 30C3.9 15.9 14.3 14.6 16.9 21.1C19.4 8.1 32.4 5.5 35 15.9L63 41C53.2 31.5 48 15.9 55.8 5" transform="translate(0 18)" fill="none" stroke="#7897b4" stroke-width="7.5" stroke-linecap="round" stroke-linejoin="round"/><path d="M6.5 30C3.9 15.9 14.3 14.6 16.9 21.1C19.4 8.1 32.4 5.5 35 15.9L63 41C53.2 31.5 48 15.9 55.8 5" transform="translate(0 16)" fill="none" stroke="#7897b4" stroke-width="7.5" stroke-linecap="round" stroke-linejoin="round"/><path d="M6.5 30C3.9 15.9 14.3 14.6 16.9 21.1C19.4 8.1 32.4 5.5 35 15.9L63 41C53.2 31.5 48 15.9 55.8 5" transform="translate(0 14)" fill="none" stroke="#7897b4" stroke-width="7.5" stroke-linecap="round" stroke-linejoin="round"/><path d="M6.5 30C3.9 15.9 14.3 14.6 16.9 21.1C19.4 8.1 32.4 5.5 35 15.9L63 41C53.2 31.5 48 15.9 55.8 5" transform="translate(0 12)" fill="none" stroke="#7897b4" stroke-width="7.5" stroke-linecap="round" stroke-linejoin="round"/><path d="M6.5 30C3.9 15.9 14.3 14.6 16.9 21.1C19.4 8.1 32.4 5.5 35 15.9L63 41C53.2 31.5 48 15.9 55.8 5" transform="translate(0 10)" fill="none" stroke="#7897b4" stroke-width="7.5" stroke-linecap="round" stroke-linejoin="round"/><path d="M6.5 30C3.9 15.9 14.3 14.6 16.9 21.1C19.4 8.1 32.4 5.5 35 15.9L63 41C53.2 31.5 48 15.9 55.8 5" transform="translate(0 8)" fill="none" stroke="#7897b4" stroke-width="7.5" stroke-linecap="round" stroke-linejoin="round"/><path d="M6.5 30C3.9 15.9 14.3 14.6 16.9 21.1C19.4 8.1 32.4 5.5 35 15.9L63 41C53.2 31.5 48 15.9 55.8 5" transform="translate(0 6)" fill="none" stroke="#7897b4" stroke-width="7.5" stroke-linecap="round" stroke-linejoin="round"/><path d="M6.5 30C3.9 15.9 14.3 14.6 16.9 21.1C19.4 8.1 32.4 5.5 35 15.9L63 41C53.2 31.5 48 15.9 55.8 5" transform="translate(0 4)" fill="none" stroke="#7897b4" stroke-width="7.5" stroke-linecap="round" stroke-linejoin="round"/><path d="M6.5 30C3.9 15.9 14.3 14.6 16.9 21.1C19.4 8.1 32.4 5.5 35 15.9L63 41C53.2 31.5 48 15.9 55.8 5" transform="translate(0 2)" fill="none" stroke="#7897b4" stroke-width="7.5" stroke-linecap="round" stroke-linejoin="round"/></g><path d="M6.5 30C3.9 15.9 14.3 14.6 16.9 21.1C19.4 8.1 32.4 5.5 35 15.9L63 41C53.2 31.5 48 15.9 55.8 5" fill="none" stroke="#9cc3e0" stroke-width="7.5" stroke-linecap="round" stroke-linejoin="round"/></svg>
<div class="a lbl" style="left:1609px;top:934px;width:120px">Sphere</div>
<div class="a lbl" style="left:1766px;top:934px;width:120px">Scribble</div>
<div class="a" style="left:1240px;top:225px;width:320px;height:389px;background:#f9f9f9;border-radius:4px;box-shadow:0 1px 3px rgba(0,0,0,.18)"></div>
<div class="a" style="left:1240px;top:225px;width:320px;height:51px;background:#fff;border-radius:4px 4px 0 0;border-bottom:1px solid #e3e5e8"></div>
<div class="a" style="left:1290px;top:225px;width:1px;height:51px;background:#e6e8eb"></div>
<svg class="a" style="left:1256px;top:241px" width="20" height="13" viewBox="0 0 20 13"><path d="M1.5 11.8L10 1.5L18.5 11.8Z" fill="#34495e" stroke="#34495e" stroke-width="2" stroke-linejoin="round"/></svg>
<div class="a" style="left:1304px;top:238.5px;font-size:18.5px;line-height:22px;color:#34495e;-webkit-text-stroke:0.6px #34495e;letter-spacing:0.4px">Shape</div>
<svg class="a" style="left:1475px;top:234px" width="18" height="25" viewBox="0 0 18 25"><path d="M5.8 9.5V7A5 5 0 0 1 15.8 7V11.5" fill="none" stroke="#5d6b78" stroke-width="2.4"/><rect x="0.8" y="11" width="16" height="13" rx="2" fill="#5d6b78"/></svg>
<svg class="a" style="left:1517px;top:234px" width="19" height="25" viewBox="0 0 19 25"><path d="M6 17.5Q6 14.8 3.6 12.5A8 8 0 1 1 15.4 12.5Q13 14.8 13 17.5Z" fill="#c9ced4" stroke="#5d6b78" stroke-width="1.5"/><path d="M6 20H13M6.8 22.8H12.2" stroke="#5d6b78" stroke-width="1.8"/></svg>
<svg class="a" style="left:1308px;top:306px" width="64" height="64" viewBox="-32 -32 64 64"><circle r="30" fill="#fff"/><circle r="25" fill="#f58a1f"/></svg>
<svg class="a" style="left:1428px;top:306px" width="64" height="64" viewBox="-32 -32 64 64"><defs><pattern id="hst" width="13" height="13" patternUnits="userSpaceOnUse" patternTransform="rotate(45)"><rect width="13" height="13" fill="#cacaca"/><rect width="6.5" height="13" fill="#a9a9a9"/></pattern></defs><circle r="30.3" fill="#fff" stroke="#5b8fd8" stroke-width="1.6"/><circle r="25" fill="url(#hst)"/></svg>
<div class="a lbl" style="left:1300px;top:379.5px;width:80px">Solid</div>
<div class="a lbl" style="left:1420px;top:379.5px;width:80px">Hole</div>
<div class="a" style="left:1255px;top:444px;width:290px;height:1px;background:#e6e8ea"></div>
<div class="a pn" style="left:1255px;top:470px;line-height:18px">Sides</div>
<div class="a pn" style="left:1255px;top:519px;line-height:18px">Bevel</div>
<div class="a pn" style="left:1255px;top:569px;line-height:18px">Segments</div>
<div class="a" style="left:1355px;top:478.5px;width:106px;height:3px;background:#5b8fd8"></div>
<div class="a" style="left:1362px;top:528px;width:101px;height:2px;background:#eaeaec"></div>
<div class="a" style="left:1362px;top:578px;width:101px;height:2px;background:#eaeaec"></div>
<div class="a" style="left:1453px;top:472px;width:16px;height:16px;border-radius:8px;background:#fff;border:1.5px solid #222"></div>
<div class="a" style="left:1345px;top:521px;width:16px;height:16px;border-radius:8px;background:#fff;border:1.5px solid #222"></div>
<div class="a" style="left:1345px;top:571px;width:16px;height:16px;border-radius:8px;background:#fff;border:1.5px solid #222"></div>
<div class="a" style="left:1480px;top:471px;width:51px;text-align:right;font-size:13px;line-height:16px;color:#4b5865">64</div>
<div class="a" style="left:1480px;top:520px;width:51px;text-align:right;font-size:13px;line-height:16px;color:#4b5865">0</div>
<div class="a" style="left:1480px;top:570px;width:51px;text-align:right;font-size:13px;line-height:16px;color:#4b5865">1</div>
<div class="a" style="left:1563px;top:556px;width:20px;height:58px;background:#f6f6f7;border:1px solid #e2e3e6;border-right:none"></div>
<svg class="a" style="left:1567px;top:571px" width="12" height="28" viewBox="0 0 12 28"><path d="M2 2L10 14L2 26" fill="none" stroke="#222" stroke-width="2.4"/></svg>
<div class="a" style="left:1450px;top:880px;width:113px;height:27px;background:#fff;border:1px solid #e0e2e5;border-radius:2px;font-size:14.5px;line-height:25px;text-align:center;color:#7d8995">Edit Grid</div>
<div class="a" style="left:1396px;top:924px;font-size:15px;line-height:18px;color:#4b5865">Snap Grid</div>
<div class="a" style="left:1473px;top:920px;width:90px;height:27px;background:#fff;border:1px solid #e0e2e5;border-radius:2px;font-size:14px;line-height:25px;color:#6b7785;padding-left:10px">0.1 mm</div>
<svg class="a" style="left:1541px;top:929px" width="9" height="6" viewBox="0 0 9 6"><path d="M0.5 5.5L4.5 0.5L8.5 5.5Z" fill="#333"/></svg>
<div class="a" style="left:0;top:961px;width:1920px;height:69px;background:#fff"></div>
<svg class="a" style="left:24px;top:984px" width="22" height="22" viewBox="0 0 22 22"><path d="M11 1.2L19.8 6.2V15.8L11 20.8L2.2 15.8V6.2Z" fill="#fff" stroke="#3c4043" stroke-width="1.3" stroke-linejoin="round"/><path d="M11 11V4.5" stroke="#2a2d30" stroke-width="2.2"/><path d="M12.2 5V11.5L17 14" stroke="#5bbde6" stroke-width="2"/><path d="M10 11L5 14" stroke="#2a2d30" stroke-width="2.2"/><path d="M5.5 15.5L11 12.2L16.5 15.5" stroke="#c5c8cc" stroke-width="1.4" fill="none"/></svg>
<div class="a" style="left:71px;top:986px;font-size:16.5px;line-height:20px;color:#3c4043">micromotor model.stl</div>
<svg class="a" style="left:259px;top:990px" width="14" height="10" viewBox="0 0 14 10"><path d="M1.5 8.5L7 2.5L12.5 8.5" fill="none" stroke="#5f6368" stroke-width="1.8"/></svg>
<div class="a" style="left:295px;top:969px;width:1px;height:54px;background:#dadce0"></div>
<div class="a" style="left:1778px;top:975px;width:97px;height:40px;border:1px solid #dadce0;border-radius:4px;font-size:16px;line-height:38px;text-align:center;color:#1a73e8">Show all</div>
<svg class="a" style="left:1890px;top:988px" width="14" height="14" viewBox="0 0 14 14"><path d="M1.5 1.5L12.5 12.5M12.5 1.5L1.5 12.5" stroke="#5f6368" stroke-width="2"/></svg>
<div class="a" style="left:0;top:1030px;width:1920px;height:50px;background:linear-gradient(90deg,#1e1915 0px,#1e1915 60px,#352a22 490px,#2f2621 650px,#252120 880px,#2f261f 1000px,#33281f 1160px,#28201e 1300px,#33291f 1420px,#2d2520 1550px,#2b231f 1920px)"></div>
<div class="a" style="left:0;top:1030px;width:60px;height:50px;background:#1c1714"></div>
<svg class="a" style="left:19px;top:1044px" width="22" height="22" viewBox="0 0 22 22"><path d="M0 3.1L9 1.8V10.4H0ZM10.2 1.6L22 0V10.4H10.2ZM0 11.6H9V20.2L0 18.9ZM10.2 11.6H22V22L10.2 20.4Z" fill="#fff"/></svg>
<div class="a" style="left:60px;top:1030px;width:430px;height:50px;background:#f0f0f0;border-top:1px solid #c9c9c9"></div>
<svg class="a" style="left:74px;top:1044px" width="22" height="22" viewBox="0 0 22 22"><circle cx="13" cy="8.5" r="6.8" fill="none" stroke="#222" stroke-width="1.5"/><path d="M8.2 13.3L1.5 20.5" stroke="#222" stroke-width="1.6"/></svg>
<div class="a" style="left:110px;top:1043px;font-size:20px;line-height:24px;color:#333;transform-origin:0 0;transform:scaleX(.93)">Type here to search</div>
<svg class="a" style="left:508px;top:1043px" width="24" height="24" viewBox="0 0 24 24"><circle cx="12" cy="12" r="9.5" fill="none" stroke="#fff" stroke-width="2.4"/></svg>
<svg class="a" style="left:568px;top:1043px" width="24" height="22" viewBox="0 0 24 22"><path d="M1 1H17M1 21H17M3.5 4.5H14.5V17.5H3.5ZM20.5 1V21" fill="none" stroke="#fff" stroke-width="1.6"/><path d="M18.5 7H22.5M18.5 15H22.5" stroke="#fff" stroke-width="1.4"/></svg>
<svg class="a" style="left:630px;top:1042px" width="28" height="25" viewBox="0 0 28 25"><path d="M0 2A2 2 0 0 1 2 0H10L13 3H26A2 2 0 0 1 28 5V23A2 2 0 0 1 26 25H2A2 2 0 0 1 0 23Z" fill="#e8a317"/><rect x="0" y="7" width="28" height="18" rx="1.5" fill="#ffc83d"/><path d="M7 14H21V21H17V17.5H11V21H7Z" fill="#1b75bb"/></svg>
<svg class="a" style="left:690px;top:1039px" width="30" height="31" viewBox="0 0 30 31"><path d="M9.5 8V5A5.5 5.5 0 0 1 20.5 5V8" fill="none" stroke="#eee" stroke-width="2"/><rect x="0" y="8" width="30" height="23" rx="2" fill="#f3f3f3"/><rect x="9" y="13" width="5.5" height="5.5" fill="#f25022"/><rect x="15.5" y="13" width="5.5" height="5.5" fill="#7fba00"/><rect x="9" y="19.5" width="5.5" height="5.5" fill="#00a4ef"/><rect x="15.5" y="19.5" width="5.5" height="5.5" fill="#ffb900"/></svg>
<svg class="a" style="left:754px;top:1041px" width="28" height="28" viewBox="0 0 28 28"><defs><linearGradient id="stg" x1="0" y1="0" x2="0" y2="1"><stop offset="0" stop-color="#111a45"/><stop offset="1" stop-color="#1a74b8"/></linearGradient></defs><circle cx="14" cy="14" r="14" fill="url(#stg)"/><circle cx="18.5" cy="10" r="4.8" fill="#fff"/><circle cx="18.5" cy="10" r="2.8" fill="#173a78"/><circle cx="18.5" cy="10" r="1.9" fill="#fff"/><path d="M0.5 13.5L9 17.5L17 11" stroke="#fff" stroke-width="3.6" stroke-linecap="round"/><circle cx="10" cy="19" r="3.2" fill="#fff"/><circle cx="10" cy="19" r="1.8" fill="#1a5c9c"/></svg>
<svg class="a" style="left:814px;top:1040px" width="31" height="30" viewBox="0 0 31 30"><path d="M1 2L6 0H25L30 2V27L27 30H4L1 27Z" fill="#1a1b1c"/><path d="M2 3Q1 15 3 27M29 3Q30 15 28 27" fill="none" stroke="#27b6e0" stroke-width="1.2"/><path d="M7 5L12 11L15.5 10L19 11L24 5L23 17L19 21L15.5 27L12 21L8 17Z" fill="#6c6e70"/><path d="M12 13L15.5 16L19 13L18 19H13Z" fill="#2a2a2a"/></svg>
<svg class="a" style="left:876px;top:1040px" width="46" height="40" viewBox="0 0 46 40"><path d="M0 9L15 0L30 9V28H0Z" fill="#0f6cc4"/><path d="M2 9H28L15 17Z" fill="#fff"/><path d="M0 9L15 18L30 9V28H0Z" fill="#29a3ee"/><circle cx="32" cy="24" r="10.5" fill="#2c3033" stroke="#b8b8b8" stroke-width="1"/><text x="32" y="29.5" font-size="14.5" font-weight="bold" fill="#fff" text-anchor="middle" font-family="Liberation Sans">59</text></svg>
<div class="a" style="left:924px;top:1030px;width:61px;height:50px;background:#4f4843"></div>
<div class="a" style="left:924px;top:1077px;width:61px;height:3px;background:#76b9ed"></div>
<svg class="a" style="left:939px;top:1041px" width="28" height="28" viewBox="-14 -14 28 28"><path d="M0 0L-12.12 -7.00A14 14 0 0 1 12.12 -7.00Z" fill="#db4437"/><path d="M0 0L12.12 -7.00A14 14 0 0 1 0.00 14.00Z" fill="#f4c20d"/><path d="M0 0L0.00 14.00A14 14 0 0 1 -12.12 -7.00Z" fill="#0f9d58"/><circle r="6.3" fill="#fff"/><circle r="4.9" fill="#4285f4"/></svg>
<svg class="a" style="left:1001px;top:1040px" width="30" height="30" viewBox="0 0 30 30"><rect width="30" height="30" fill="#f5d6b8"/><path d="M8 4H21V9H13V13H19V18H13V26H8Z" fill="#e88a1a"/><text x="20" y="27" font-size="5" fill="#e88a1a" font-family="Liberation Sans">360</text></svg>
<svg class="a" style="left:1064px;top:1041px" width="28" height="28" viewBox="-14 -14 28 28"><circle r="14" fill="#00979c"/><ellipse cx="-5" cy="0" rx="4.5" ry="3.8" fill="none" stroke="#fff" stroke-width="2"/><ellipse cx="5" cy="0" rx="4.5" ry="3.8" fill="none" stroke="#fff" stroke-width="2"/></svg>
<svg class="a" style="left:1126px;top:1040px" width="29" height="30" viewBox="0 0 29 30"><rect width="29" height="30" rx="7" fill="#2d8cff"/><rect x="5" y="10" width="13" height="10" rx="2" fill="#fff"/><path d="M19 13.5L24 10.5V19.5L19 16.5Z" fill="#fff"/></svg>
<svg class="a" style="left:1514px;top:1049px" width="17" height="11" viewBox="0 0 17 11"><path d="M1 10L8.5 2L16 10" fill="none" stroke="#fff" stroke-width="1.3"/></svg>
<svg class="a" style="left:1545px;top:1046px" width="16" height="19" viewBox="0 0 16 19"><rect x="1" y="5" width="9" height="9" rx="1.5" fill="none" stroke="#fff" stroke-width="1.3"/><path d="M10.5 8L15 5.5V13.5L10.5 11Z" fill="none" stroke="#fff" stroke-width="1.2"/><path d="M2 2.5Q5.5 0.5 9 2.5M2 16.5Q5.5 18.5 9 16.5" fill="none" stroke="#fff" stroke-width="1"/></svg>
<svg class="a" style="left:1571px;top:1047px" width="22" height="14" viewBox="0 0 22 14"><path d="M4 13.5A3.8 3.8 0 0 1 4.5 6A6 6 0 0 1 15.5 5A4.3 4.3 0 0 1 17.5 13.5Z" fill="#e6e6e6"/></svg>
<svg class="a" style="left:1601px;top:1047px" width="22" height="14" viewBox="0 0 22 14"><rect x="3" y="3" width="17" height="10" fill="none" stroke="#fff" stroke-width="1.3"/><rect x="5" y="5" width="13" height="6" fill="#fff"/><rect x="20" y="6" width="1.5" height="4" fill="#fff"/><path d="M1 0V3M3.5 0V3M0 3H4.5V5L2.25 7" fill="none" stroke="#fff" stroke-width="1"/></svg>
<svg class="a" style="left:1634px;top:1047px" width="17" height="17" viewBox="0 0 17 17"><path d="M1 16A15 15 0 0 1 16 1M4.5 16A11.5 11.5 0 0 1 16 4.5M8 16A8 8 0 0 1 16 8M11.5 16A4.5 4.5 0 0 1 16 11.5" fill="none" stroke="#fff" stroke-width="1.1"/><circle cx="15" cy="15" r="1.5" fill="#fff"/></svg>
<svg class="a" style="left:1661px;top:1046px" width="22" height="19" viewBox="0 0 22 19"><path d="M1 6.5H4.5L9.5 1.5V17.5L4.5 12.5H1Z" fill="none" stroke="#fff" stroke-width="1.2"/><path d="M12.5 7Q14 9.5 12.5 12M15 5Q18 9.5 15 14M17.5 2.5Q22 9.5 17.5 16.5" fill="none" stroke="#fff" stroke-width="1.2"/></svg>
<svg class="a" style="left:1691px;top:1046px" width="21" height="19" viewBox="0 0 21 19"><path d="M5.5 0.5L10.5 3.5L5.5 6.5L0.5 3.5ZM15.5 0.5L20.5 3.5L15.5 6.5L10.5 3.5ZM5.5 6.5L10.5 9.5L5.5 12.5L0.5 9.5ZM15.5 6.5L20.5 9.5L15.5 12.5L10.5 9.5ZM10.5 11L15 13.5L10.5 16L6 13.5Z" fill="#e6e6e6"/><rect x="1" y="8" width="10" height="10.5" fill="#d11124"/><text x="6" y="16.5" font-size="9" font-weight="bold" fill="#fff" text-anchor="middle" font-family="Liberation Sans">3</text></svg>
<div class="a" style="left:1724px;top:1046px;font-size:15px;line-height:18px;color:#fff">ENG</div>
<div class="a" style="left:1770px;top:1034px;width:76px;text-align:center;font-size:15px;line-height:18px;color:#fff">21:51</div>
<div class="a" style="left:1766px;top:1057px;width:84px;text-align:center;font-size:15px;line-height:18px;color:#fff">04/04/2021</div>
<svg class="a" style="left:1868px;top:1044px" width="34" height="32" viewBox="0 0 34 32"><path d="M1 1H21V16H11L6 21V16H1Z" fill="#fff"/><path d="M5 5.5H17M5 9H17M5 12.5H14" stroke="#333" stroke-width="1.1"/><circle cx="20" cy="20" r="10.5" fill="#333" stroke="#ccc" stroke-width="1"/><text x="20" y="25.5" font-size="14" font-weight="bold" fill="#fff" text-anchor="middle" font-family="Liberation Sans">14</text></svg>
<div class="a" style="left:1914px;top:1030px;width:1px;height:50px;background:#7a6e66"></div>
</body></html>
